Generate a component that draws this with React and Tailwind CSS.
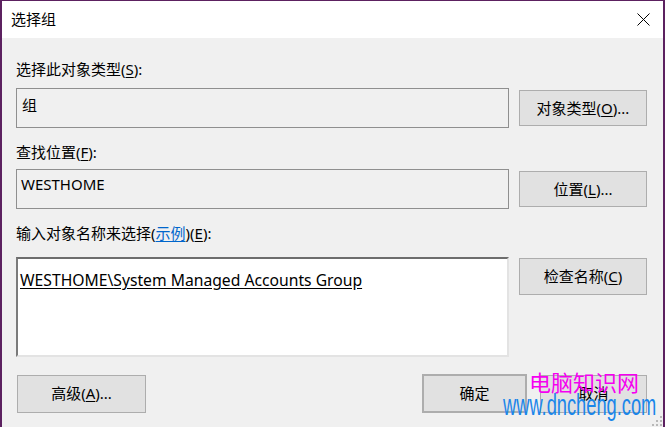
import React from 'react'

const FONT = { fontFamily: '"Noto Sans", "Noto Sans CJK SC", sans-serif' }

function Btn({ children, className = '' }) {
  return (
    <div className={`flex items-center justify-center bg-[#e1e1e1] border border-[#adadad] text-[15px] text-black ${className}`}>
      {children}
    </div>
  )
}

export default function App() {
  return (
    <div
      className="relative w-[665px] h-[427px] overflow-hidden bg-[#f0f0f0] border-l-2 border-r-2 border-t border-[#5c2160] text-black"
      style={FONT}
    >
      {/* title bar */}
      <div className="h-[37px] bg-white flex items-center justify-between pl-[9px] pr-[13px]">
        <span className="text-[15px] leading-none">选择组</span>
        <svg width="13" height="13" viewBox="0 0 13 13">
          <path d="M0.5 0.5 L12.5 12.5 M12.5 0.5 L0.5 12.5" stroke="#000" strokeWidth="1" />
        </svg>
      </div>

      <div className="pl-[14px] pr-[16px]">
        <div className="pt-[21px] text-[15px] leading-[20px]">
          选择此对象类型(<u className="underline-offset-2">S</u>):
        </div>
        <div className="mt-[9px] flex items-center gap-[10px]">
          <div className="w-[493px] h-[40px] border border-[#8f8f8f] px-[5px] pt-[6px] text-[15px] leading-[20px]">组</div>
          <Btn className="w-[128px] h-[36px]">对象类型(<u className="underline-offset-2">O</u>)...</Btn>
        </div>

        <div className="mt-[14px] text-[15px] leading-[20px]">
          查找位置(<u className="underline-offset-2">F</u>):
        </div>
        <div className="mt-[7px] flex items-center gap-[10px]">
          <div className="w-[493px] h-[40px] border border-[#8f8f8f] px-[4px] pt-[4px] text-[15px] leading-[20px]">WESTHOME</div>
          <Btn className="w-[128px] h-[36px]">位置(<u className="underline-offset-2">L</u>)...</Btn>
        </div>

        <div className="mt-[14px] text-[15px] leading-[20px]">
          输入对象名称来选择(<span className="text-[#0066cc] underline underline-offset-2">示例</span>)(<u className="underline-offset-2">E</u>):
        </div>
        <div className="mt-[14px] flex items-start gap-[10px]">
          <div className="w-[493px] h-[100px] bg-white border-2 border-t-[#6d6d6d] border-l-[#7a7a7a] border-r-[#e3e3e3] border-b-[#e3e3e3] px-[2px] pt-[9px]">
            <span className="text-[15.7px] leading-[20px] underline underline-offset-2">WESTHOME\System Managed Accounts Group</span>
          </div>
          <Btn className="w-[128px] h-[37px] mt-[1px]">检查名称(<u className="underline-offset-2">C</u>)</Btn>
        </div>

        <div className="mt-[17px] flex items-center">
          <Btn className="w-[129px] h-[38px] ml-[1px]">高级(<u className="underline-offset-2">A</u>)...</Btn>
          <div className="flex-1" />
          <Btn className="w-[105px] h-[39px] border-2 border-[#0078d7]">确定</Btn>
          <Btn className="w-[107px] h-[38px] ml-[13px]">取消</Btn>
        </div>
      </div>

      {/* watermark */}
      <div className="absolute left-[527px] top-[370px] text-[22px] leading-none text-[#f500f0] whitespace-nowrap">电脑知识网</div>
      <div
        className="absolute left-[501px] top-[390px] text-[29px] leading-none text-[#1a86ea] whitespace-nowrap origin-left scale-x-[0.63]"
        style={{ fontFamily: '"Liberation Sans", Arial, sans-serif' }}
      >
        www.dncheng.com
      </div>

      {/* resize grip */}
      <svg className="absolute right-0 bottom-0" width="12" height="12" viewBox="0 0 12 12">
        <rect x="9" y="1" width="2" height="2" fill="#b8b8b8" />
        <rect x="5" y="5" width="2" height="2" fill="#b8b8b8" />
        <rect x="9" y="5" width="2" height="2" fill="#b8b8b8" />
        <rect x="1" y="9" width="2" height="2" fill="#b8b8b8" />
        <rect x="5" y="9" width="2" height="2" fill="#b8b8b8" />
        <rect x="9" y="9" width="2" height="2" fill="#b8b8b8" />
      </svg>
    </div>
  )
}
